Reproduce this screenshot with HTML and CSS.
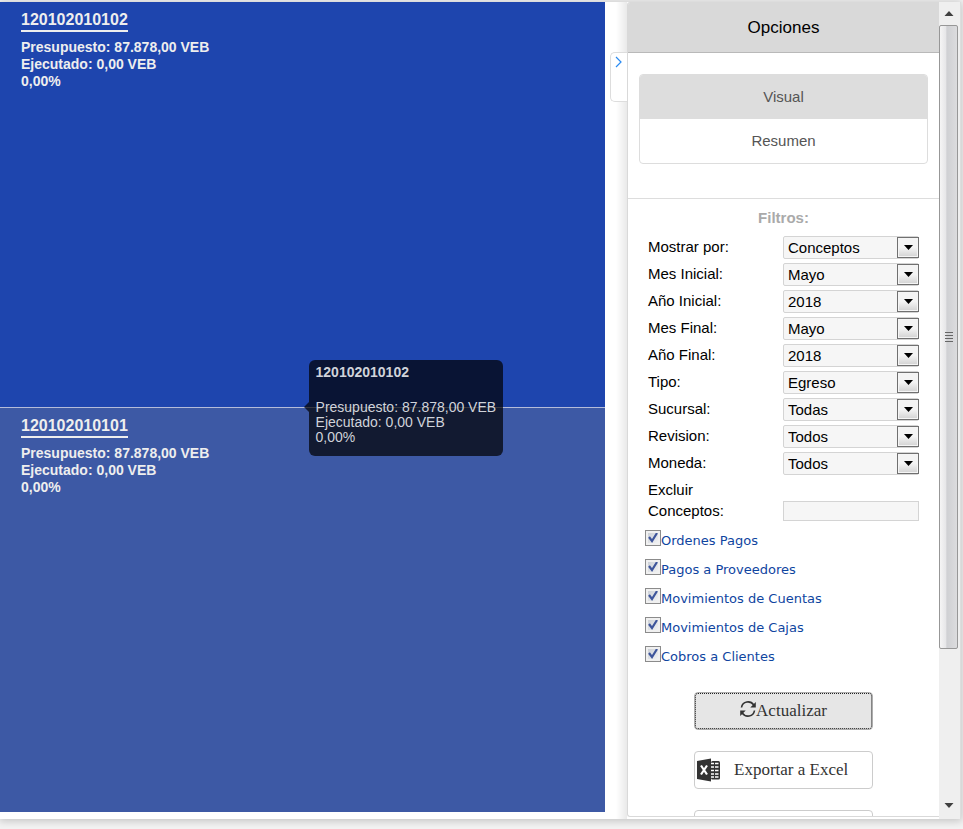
FILE: index.html
```html
<!DOCTYPE html>
<html lang="es">
<head>
<meta charset="utf-8">
<title>Presupuesto</title>
<link rel="stylesheet" href="styles.css">
</head>
<body>
<div class="app">
  <main class="chart">
    <section class="tile">
      <h2 class="tile-title">120102010102</h2>
      <p class="tile-text">Presupuesto: 87.878,00 VEB<br>Ejecutado: 0,00 VEB<br>0,00%</p>
    </section>
    <section class="tile tile-muted">
      <h2 class="tile-title">120102010101</h2>
      <p class="tile-text">Presupuesto: 87.878,00 VEB<br>Ejecutado: 0,00 VEB<br>0,00%</p>
    </section>
    <div class="tooltip" role="tooltip">
      <strong>120102010102</strong>
      <p>Presupuesto: 87.878,00 VEB<br>Ejecutado: 0,00 VEB<br>0,00%</p>
    </div>
  </main>
  <div class="gutter">
    <button class="toggle" type="button" aria-label="Ocultar opciones">
      <svg width="8" height="12" viewBox="0 0 8 12"><path d="M1 1l5 5-5 5" fill="none" stroke="#2a8bf2" stroke-width="1.2"/></svg>
    </button>
  </div>
  <aside class="panel">
    <h1 class="panel-title">Opciones</h1>
    <nav class="views">
      <div class="view-list">
        <a class="view active" href="#visual">Visual</a>
        <a class="view" href="#resumen">Resumen</a>
      </div>
    </nav>
    <form class="filters">
      <h3 class="filters-title">Filtros:</h3>
      <div class="fields">
        <label for="mostrar">Mostrar por:</label>
        <span class="select"><select id="mostrar"><option>Conceptos</option></select></span>
        <label for="mes-inicial">Mes Inicial:</label>
        <span class="select"><select id="mes-inicial"><option>Mayo</option></select></span>
        <label for="ano-inicial">Año Inicial:</label>
        <span class="select"><select id="ano-inicial"><option>2018</option></select></span>
        <label for="mes-final">Mes Final:</label>
        <span class="select"><select id="mes-final"><option>Mayo</option></select></span>
        <label for="ano-final">Año Final:</label>
        <span class="select"><select id="ano-final"><option>2018</option></select></span>
        <label for="tipo">Tipo:</label>
        <span class="select"><select id="tipo"><option>Egreso</option></select></span>
        <label for="sucursal">Sucursal:</label>
        <span class="select"><select id="sucursal"><option>Todas</option></select></span>
        <label for="revision">Revision:</label>
        <span class="select"><select id="revision"><option>Todos</option></select></span>
        <label for="moneda">Moneda:</label>
        <span class="select"><select id="moneda"><option>Todos</option></select></span>
        <label for="excluir">Excluir<br>Conceptos:</label>
        <input class="textbox" id="excluir" type="text">
      </div>
      <div class="checks">
        <div class="check"><input type="checkbox" id="c1" checked><label for="c1">Ordenes Pagos</label></div>
        <div class="check"><input type="checkbox" id="c2" checked><label for="c2">Pagos a Proveedores</label></div>
        <div class="check"><input type="checkbox" id="c3" checked><label for="c3">Movimientos de Cuentas</label></div>
        <div class="check"><input type="checkbox" id="c4" checked><label for="c4">Movimientos de Cajas</label></div>
        <div class="check"><input type="checkbox" id="c5" checked><label for="c5">Cobros a Clientes</label></div>
      </div>
      <div class="actions">
        <button class="btn pressed" type="button">
          <svg width="16" height="16" viewBox="0 0 16 16"><g fill="none" stroke="#333" stroke-width="1.6"><path d="M1.500 6.500C2.500 0 10.500-.8 13.800 4"/><path d="M14.500 9.500C13.500 16 5.500 16.800 2.200 12"/></g><path d="M15.800 1v5.500H10.300zM.2 15V9.500H5.700z" fill="#333"/></svg>
          <span>Actualizar</span>
        </button>
        <button class="btn export" type="button">
          <svg width="24" height="24" viewBox="0 0 24 24"><path d="M0 3L14 .5v23L0 21z" fill="#333"/><path d="M4 7.500l6 9M10 7.500l-6 9" stroke="#fff" stroke-width="2.200"/><rect x="14" y="3" width="9" height="18.500" rx="1.500" fill="#333"/><path d="M14 5.500h3M14 9h3M14 12.500h3M14 16h3M18 5.500h3.500M18 9h3.500M18 12.500h3.500M18 16h3.500M14 19h3M18 19h3.500" stroke="#fff" stroke-width="1.500"/></svg>
          <span>Exportar a Excel</span>
        </button>
        <button class="btn" type="button" aria-label="Exportar"></button>
      </div>
    </form>
  </aside>
  <div class="scrollbar" aria-hidden="true">
    <svg width="10" height="6" viewBox="0 0 10 6"><path d="M5 0l4.500 5h-9z" fill="#404040"/></svg>
    <div class="track"><div class="thumb"><i></i><i></i><i></i><i></i></div></div>
    <svg width="10" height="6" viewBox="0 0 10 6"><path d="M.5 0h9L5 5z" fill="#404040"/></svg>
  </div>
</div>
</body>
</html>
```
FILE: styles.css
```css
*,
*::before,
*::after { box-sizing: border-box; }

body {
  margin: 0;
  padding: 2px 2px 10px 0;
  height: 100vh;
  overflow: hidden;
  background: #f3f3f3;
  font-family: "Liberation Sans", Arial, sans-serif;
  font-size: 15px;
  color: #000;
}

h1, h2, h3, p { margin: 0; }

.app {
  display: flex;
  height: 100%;
  background: #fff;
  box-shadow: 0 1px 8px 1px rgba(0, 0, 0, 0.2);
}

.chart {
  position: relative;
  flex: 1;
  display: flex;
  flex-direction: column;
  gap: 1px;
  margin-bottom: 7px;
  background: #b4bcda;
}

.tile {
  flex: 1;
  padding: 7px 21px;
  background: #1e45ae;
  color: #eee;
  font-weight: bold;
}

.tile-muted { background: #3d59a5; }

.tile-title {
  display: inline-block;
  border-bottom: 2px solid #eee;
  font-size: 16px;
  line-height: 21px;
}

.tile-text {
  margin-top: 7px;
  font-size: 14px;
  line-height: 17px;
}

.tooltip {
  position: absolute;
  top: 358px;
  left: 51%;
  padding: 5px 7px 11px;
  border-radius: 6px;
  background: rgba(0, 0, 0, 0.7);
  color: #d0d3da;
  font-size: 14px;
  line-height: 15px;
  white-space: nowrap;
}

.tooltip p {
  margin-top: 20px;
}

.tooltip::before {
  content: "";
  position: absolute;
  top: 42px;
  left: -5px;
  border: solid transparent;
  border-width: 5px 5px 5px 0;
  border-right-color: rgba(0, 0, 0, 0.7);
}

.gutter {
  flex: 0 0 22px;
  display: flex;
  justify-content: flex-end;
  align-items: flex-start;
  padding-top: 50px;
  background: linear-gradient(to right, #fff 50%, #e9e9e9);
}

.toggle {
  display: flex;
  width: 17px;
  height: 50px;
  padding: 3px 4px;
  border: 1px solid #ddd;
  border-right: 0;
  border-radius: 5px 0 0 5px;
  background: #fff;
}

.toggle svg { flex: none; }

.panel {
  flex: 0 0 312px;
  margin-bottom: 2px;
  overflow: hidden;
  border: 1px solid #d9d9d9;
  border-width: 1px 0 1px 1px;
  border-radius: 3px 0 0 3px;
  background: #fff;
}

.panel-title {
  border-bottom: 1px solid #b9b9b9;
  background: #d9d9d9;
  font-size: 17px;
  font-weight: normal;
  line-height: 49px;
  text-align: center;
}

.views {
  padding: 21px 11px 34px;
  border-bottom: 1px solid #ddd;
}

.view-list {
  overflow: hidden;
  border: 1px solid #ddd;
  border-radius: 4px;
}

.view {
  display: block;
  color: #555;
  line-height: 44px;
  text-align: center;
  text-decoration: none;
}

.view.active { background: #ddd; }

.filters-title {
  padding: 9px 0 8px;
  color: #aaa;
  font-size: 15px;
  line-height: 20px;
  text-align: center;
}

.fields {
  display: grid;
  grid-template-columns: 135px 136px;
  row-gap: 4px;
  padding-left: 20px;
  line-height: 21px;
}

.select {
  position: relative;
  height: 23px;
}

.select select {
  appearance: none;
  display: block;
  width: 100%;
  height: 23px;
  padding: 0 4px;
  border: 1px solid #d4d4d4;
  border-radius: 2px;
  background: #f6f6f6;
  color: #000;
  font: 15px "Liberation Sans", Arial, sans-serif;
}

.select::after {
  content: "";
  position: absolute;
  top: 1px;
  right: 0;
  width: 22px;
  height: 21px;
  border: 1px solid #707070;
  background:
    url("data:image/svg+xml,%3Csvg xmlns='http://www.w3.org/2000/svg' width='9' height='5'%3E%3Cpath d='M0 0h9L4.5 5z'/%3E%3C/svg%3E") center no-repeat,
    linear-gradient(#f4f4f4 50%, #d2d2d2);
  box-shadow: inset 0 0 0 1px #f5f5f5;
  pointer-events: none;
}

.textbox {
  align-self: end;
  height: 20px;
  border: 1px solid #d4d4d4;
  background: #f6f6f6;
}

.checks {
  padding: 9px 0 0 17px;
}

.check {
  display: flex;
  height: 29px;
  color: #0f459f;
  font: 13px/22px "DejaVu Sans", Verdana, sans-serif;
}

.check input {
  appearance: none;
  width: 16px;
  height: 16px;
  margin: 0;
  border: 1px solid #8b8b8b;
  background:
    url("data:image/svg+xml,%3Csvg xmlns='http://www.w3.org/2000/svg' width='14' height='14'%3E%3Cpath d='M3 6l3 4 5-8' fill='none' stroke='%233e559b' stroke-width='2.2'/%3E%3C/svg%3E") center no-repeat,
    linear-gradient(135deg, #c5cad2, #f8f8f8);
  box-shadow: inset 0 0 0 2px #f0f0f0;
}

.actions {
  display: flex;
  flex-direction: column;
  align-items: center;
  gap: 21px;
  padding-top: 17px;
}

.btn {
  display: flex;
  align-items: center;
  justify-content: center;
  width: 179px;
  height: 38px;
  padding: 0 2px;
  border: 1px solid #ccc;
  border-radius: 4px;
  background: #fff;
  color: #333;
  font: 17px "Liberation Serif", "Times New Roman", serif;
}

.pressed {
  border-color: #adadad;
  background: #e6e6e6;
  outline: 1px dotted #222;
  outline-offset: -2px;
}

.pressed svg { margin-bottom: 4px; }

.export {
  justify-content: flex-start;
  gap: 13px;
}

.scrollbar {
  flex: 0 0 22px;
  display: flex;
  flex-direction: column;
  align-items: center;
  gap: 8px;
  padding: 9px 2px 10px 0;
  border-right: 1px solid #ddd;
  background: #efefef;
}

.scrollbar svg { flex: none; }

.track {
  flex: 1;
  width: 19px;
}

.thumb {
  display: flex;
  flex-direction: column;
  align-items: center;
  justify-content: center;
  gap: 2px;
  height: 81%;
  border: 1px solid #979797;
  border-radius: 2px;
  background: linear-gradient(to right, #f5f5f5, #e6e6e8 35%, #cfd0d3 40%, #dcdcde);
}

.thumb i {
  width: 8px;
  height: 1px;
  background: #666;
}
```
